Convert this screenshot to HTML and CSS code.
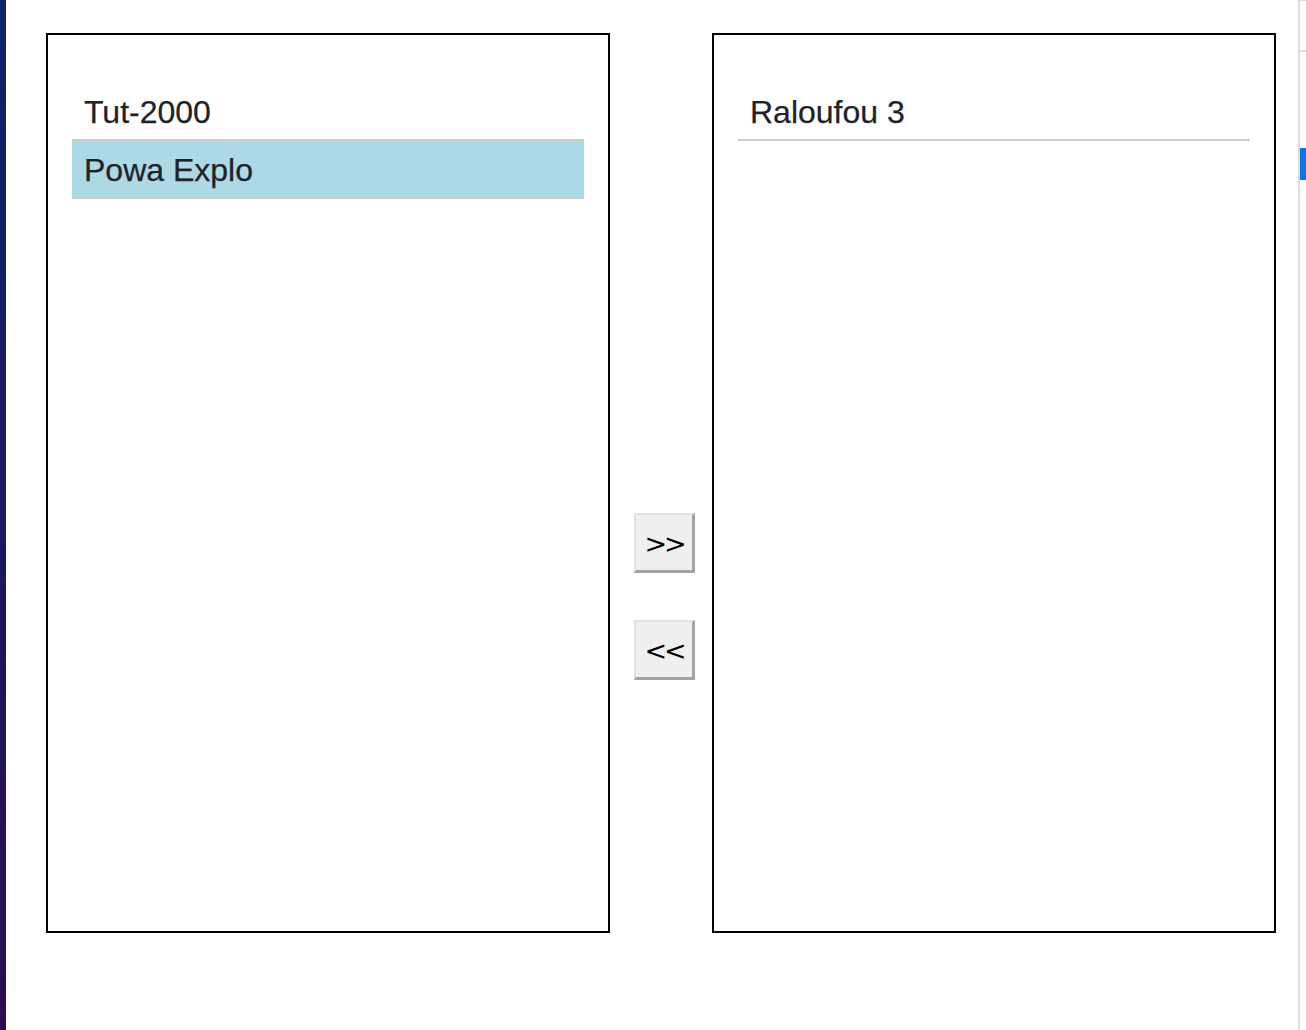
FILE: index.html
```html
<!DOCTYPE html>
<html lang="en">
<head>
<meta charset="utf-8">
<title>Transfer list</title>
<link rel="stylesheet" href="styles.css">
</head>
<body>
<div class="page">
  <div class="strip"></div>
  <main class="main">
    <div class="transfer">
      <div class="list-box">
        <ul class="list">
          <li class="item">Tut-2000</li>
          <li class="item selected">Powa Explo</li>
        </ul>
      </div>
      <div class="controls">
        <button class="move-btn" type="button">&gt;&gt;</button>
        <button class="move-btn" type="button">&lt;&lt;</button>
      </div>
      <div class="list-box">
        <ul class="list">
          <li class="item">Raloufou 3</li>
        </ul>
      </div>
    </div>
  </main>
  <aside class="rail">
    <div class="rail-top"></div>
    <div class="rail-thumb"></div>
  </aside>
</div>
</body>
</html>
```
FILE: styles.css
```css
* {
  box-sizing: border-box;
}

html, body {
  margin: 0;
  padding: 0;
  height: 100%;
  background: #ffffff;
}

body {
  font-family: "Liberation Sans", Arial, sans-serif;
  color: #212529;
  overflow: hidden;
}

.page {
  display: flex;
  height: 1030px;
  width: 1306px;
}

.strip {
  width: 6px;
  flex: 0 0 6px;
  background: linear-gradient(180deg, #0f2463 0%, #1a1a5c 50%, #2d0d4f 100%);
}

.main {
  flex: 1 1 auto;
  padding: 33px 0 0 40px;
}

.transfer {
  display: flex;
  align-items: flex-start;
}

.list-box {
  width: 564px;
  height: 900px;
  border: 2px solid #000;
  padding: 48px 24px;
  flex: 0 0 564px;
}

.list {
  list-style: none;
  margin: 0;
  padding: 0;
}

.item {
  font-size: 32px;
  line-height: 38px;
  padding: 10px 12px 8px;
  border-bottom: 2px solid #cccccc;
  color: #1f2328;
  -webkit-text-stroke: 0.25px #1f2328;
}

.item.selected {
  background: #add8e6;
}

.controls {
  flex: 0 0 102px;
  width: 102px;
  display: flex;
  flex-direction: column;
  align-items: flex-start;
  gap: 47px;
  padding: 480px 0 0 24px;
}

.move-btn {
  width: 61px;
  height: 60px;
  padding: 2px 0 0 0;
  margin: 0;
  background: #efefef;
  border-style: solid;
  border-width: 2px 3px 3px 2px;
  border-color: #e2e2e2 #a3a3a3 #a3a3a3 #e2e2e2;
  font-family: "DejaVu Sans", sans-serif;
  font-size: 27px;
  letter-spacing: -3px;
  line-height: 1;
  color: #000;
}

.rail {
  flex: 0 0 8px;
  width: 8px;
  border-left: 2px solid #dddddd;
  display: flex;
  flex-direction: column;
}

.rail-top {
  height: 52px;
  border-top: 1px solid #dddddd;
  border-bottom: 2px solid #dddddd;
}

.rail-thumb {
  margin-top: 96px;
  height: 32px;
  background: #0d74e7;
}
```
